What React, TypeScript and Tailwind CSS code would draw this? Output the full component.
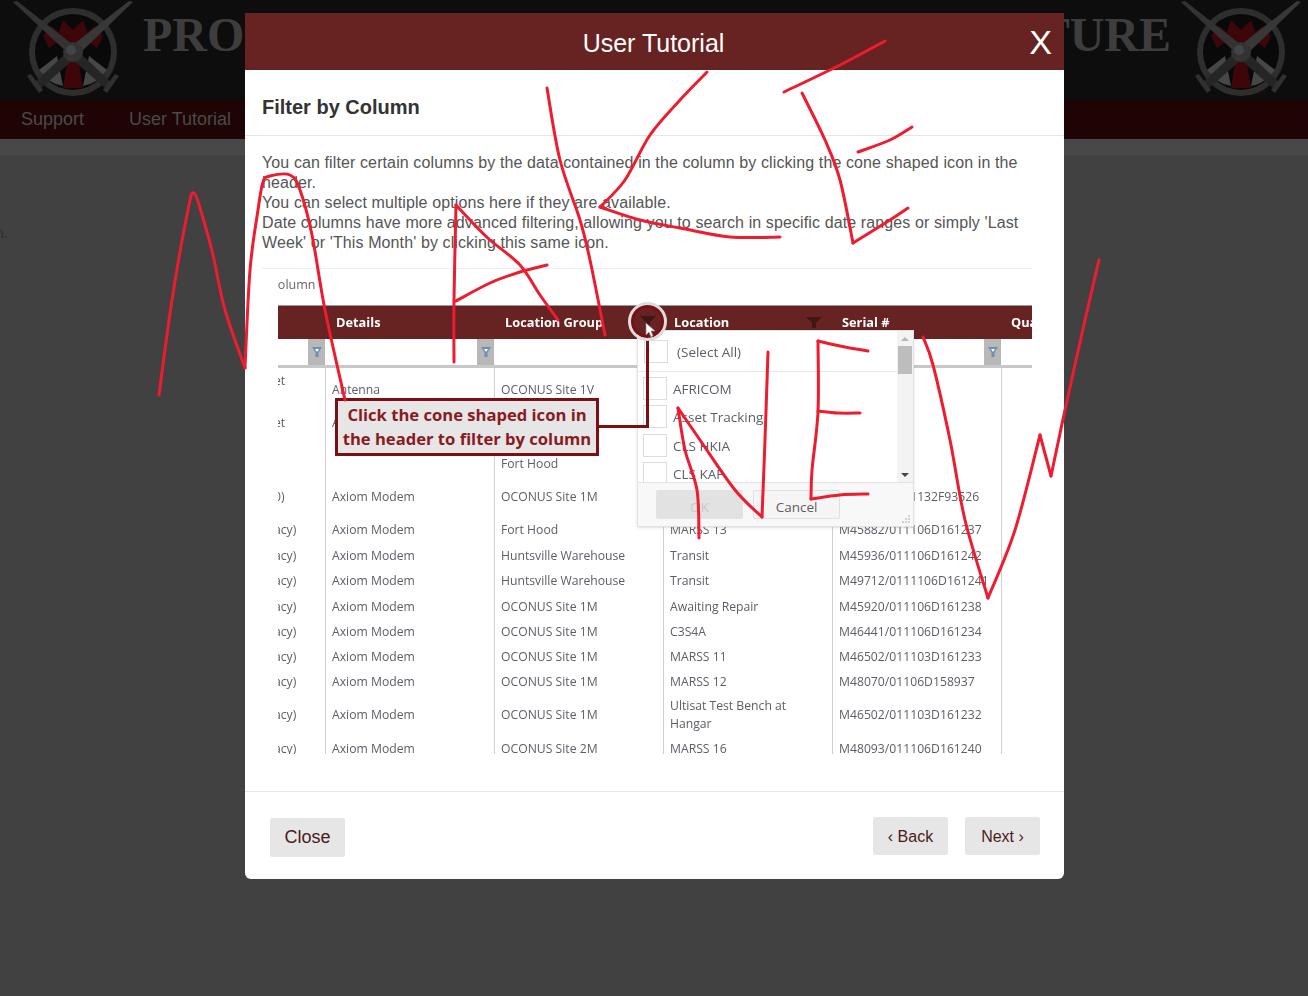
import React from "react";

const Logo = () => (
  <svg width="120" height="100" viewBox="0 0 120 100" className="shrink-0">
    <circle cx="60" cy="52" r="44" fill="#2e2e2e" />
    <circle cx="60" cy="52" r="38" fill="#090909" />
    <path d="M26 70 L44 56 L50 86 Q36 84 26 70Z" fill="#474747" />
    <path d="M94 70 L76 56 L70 86 Q84 84 94 70Z" fill="#474747" />
    <path d="M30 36 L38 26 L46 32 L50 20 L60 30 L70 20 L74 32 L82 26 L90 36 L84 48 L76 42 L68 50 L52 50 L44 42 L36 48Z" fill="#3d0709" />
    <path d="M55 58 L65 58 L70 88 L50 88Z" fill="#3d0709" />
    <path d="M0 2 L4 1 L64 48 L56 54Z" fill="#333" />
    <path d="M116 1 L120 2 L66 54 L56 48Z" fill="#383838" />
    <path d="M52 54 L60 60 L28 88 L22 82Z" fill="#252525" />
    <path d="M68 54 L60 60 L92 88 L98 82Z" fill="#252525" />
    <path d="M14 76 L18 74 L30 90 L26 93Z" fill="#303030" />
    <path d="M106 76 L102 74 L90 90 L94 93Z" fill="#303030" />
    <circle cx="60" cy="52" r="10" fill="#333" />
    <circle cx="58" cy="50" r="5" fill="#444" />
  </svg>
);

const Tri = () => (
  <svg width="16" height="11" viewBox="0 0 16 11"><path d="M0 0H16L10 6V11H6V6Z" fill="#431616" /></svg>
);

const FilterBox = () => (
  <div className="w-[17px] h-[26px] mr-[1px] bg-[#b8b8b8] flex items-center justify-center">
    <svg width="10" height="12" viewBox="0 0 10 12"><path d="M0 1H10L6.5 6.5V11H3.5V6.5Z" fill="#6b8fb5" /><path d="M3 3H7L5.5 5.5H4.5Z" fill="#fff" /></svg>
  </div>
);

type Row = { h: string; a?: string; b?: string; c?: string; d?: string; e?: string; eTop?: boolean; cCls?: string };
const rows: Row[] = [
  { h: "h-[43px]", a: "et", b: "Antenna", c: "OCONUS Site 1V", eTop: true },
  { h: "h-[24px]", a: "et", b: "Axiom Modem" },
  { h: "h-[42px]", c: "Fort Hood", cCls: "pt-[16px]" },
  { h: "h-[40px]", a: "0)", b: "Axiom Modem", c: "OCONUS Site 1M", d: "", e: "M45882/0111132F93526" },
  { h: "h-[26px]", a: "acy)", b: "Axiom Modem", c: "Fort Hood", d: "MARSS 13", e: "M45882/011106D161237" },
  { h: "h-[25px]", a: "acy)", b: "Axiom Modem", c: "Huntsville Warehouse", d: "Transit", e: "M45936/011106D161242" },
  { h: "h-[26px]", a: "acy)", b: "Axiom Modem", c: "Huntsville Warehouse", d: "Transit", e: "M49712/0111106D161241" },
  { h: "h-[25px]", a: "acy)", b: "Axiom Modem", c: "OCONUS Site 1M", d: "Awaiting Repair", e: "M45920/011106D161238" },
  { h: "h-[25px]", a: "acy)", b: "Axiom Modem", c: "OCONUS Site 1M", d: "C3S4A", e: "M46441/011106D161234" },
  { h: "h-[25px]", a: "acy)", b: "Axiom Modem", c: "OCONUS Site 1M", d: "MARSS 11", e: "M46502/011103D161233" },
  { h: "h-[25px]", a: "acy)", b: "Axiom Modem", c: "OCONUS Site 1M", d: "MARSS 12", e: "M48070/01106D158937" },
  { h: "h-[42px]", a: "acy)", b: "Axiom Modem", c: "OCONUS Site 1M", d: "Ultisat Test Bench at Hangar", e: "M46502/011103D161232" },
  { h: "h-[26px]", a: "acy)", b: "Axiom Modem", c: "OCONUS Site 2M", d: "MARSS 16", e: "M48093/011106D161240" },
];

const Cell = ({ children, cls = "" }: { children?: React.ReactNode; cls?: string }) => (
  <div className={`flex items-center pl-[6px] pr-[30px] border-r border-[#cfcfcf] leading-[18px] ${cls}`}>{children}</div>
);

const Check = ({ cls = "" }: { cls?: string }) => (
  <div className={`w-[24px] h-[23px] border border-[#dcdcdc] bg-white shrink-0 ${cls}`} />
);

const Shot = () => (
  <div className="relative w-[754px] h-[485px] overflow-hidden ml-[16px] font-['Open_Sans',sans-serif] text-[12.2px] text-[#5d5d66] blur-[0.35px]">
    <div className="h-[36px] flex items-center text-[12.5px] text-[#666]"><span className="-ml-[8px] -mt-[3px]">Column</span></div>
    <div className="h-[34px] bg-[#672222] grid grid-cols-[48px_169px_169px_169px_169px_1fr] items-center text-white font-bold text-[12.8px] border-t border-[#999]">
      <div />
      <div className="pl-[10px]">Details</div>
      <div className="pl-[10px]">Location Group</div>
      <div className="pl-[10px] flex items-center justify-between pr-[11px]"><span>Location</span><Tri /></div>
      <div className="pl-[9px]">Serial #</div>
      <div className="pl-[9px]">Quantity</div>
    </div>
    <div className="h-[29px] grid grid-cols-[48px_169px_169px_169px_169px_1fr] border-b-[3px] border-[#c8c8c8]">
      <div className="flex justify-end"><FilterBox /></div>
      <div className="flex justify-end"><FilterBox /></div>
      <div />
      <div />
      <div className="flex justify-end"><FilterBox /></div>
      <div />
    </div>
    {rows.map((r, i) => (
      <div key={i} className={`${r.h} grid grid-cols-[48px_169px_169px_169px_169px_1fr]`}>
        <Cell cls={`!pl-0 !pr-0 ${r.eTop ? "items-start pt-[4px]" : ""}`}><span className="-ml-[4px]">{r.a}</span></Cell>
        <Cell>{r.b}</Cell>
        <Cell cls={r.cCls ?? ""}>{r.c}</Cell>
        <Cell>{r.d}</Cell>
        <Cell cls="!pr-0">{r.e}</Cell>
        <div />
      </div>
    ))}

    {/* filter dropdown */}
    <div className="absolute left-[359px] top-[61px] w-[277px] h-[197px] bg-white border border-[#e2e2e2] shadow-sm flex flex-col text-[13.5px]">
      <div className="flex flex-1 min-h-0">
        <div className="flex-1 min-w-0">
          <div className="h-[41px] flex items-center pl-[6px] gap-[9px] border-b border-[#e8e8e8]"><Check /><span className="pt-[3px]">(Select All)</span></div>
          <div className="h-[28px] mt-[2px] flex items-center pl-[5px] gap-[6px]"><Check /><span className="pt-[2px]">AFRICOM</span></div>
          <div className="h-[29px] flex items-center pl-[5px] gap-[6px]"><Check /><span className="pt-[2px]">Asset Tracking</span></div>
          <div className="h-[28px] flex items-center pl-[5px] gap-[6px]"><Check /><span className="pt-[2px]">CLS HKIA</span></div>
          <div className="h-[24px] flex items-start pl-[5px] gap-[6px] pt-[3px]"><Check /><span className="pt-[2px]">CLS KAF</span></div>
        </div>
        <div className="w-[16px] bg-[#f3f3f3] flex flex-col items-center justify-between pt-[6px] pb-[5px]">
          <div className="w-[14px] flex flex-col items-center gap-[5px]">
            <div className="w-0 h-0 border-x-[4px] border-x-transparent border-b-[4px] border-b-[#b5b5b5]" />
            <div className="w-[14px] h-[28px] bg-[#bdbdbd]" />
          </div>
          <div className="w-0 h-0 border-x-[4px] border-x-transparent border-t-[4px] border-t-[#444]" />
        </div>
      </div>
      <div className="relative h-[44px] bg-[#f8f8f8] border-t border-[#e2e2e2] flex gap-[10px] pl-[18px] pt-[7px]">
        <div className="w-[87px] h-[29px] pt-[5px] rounded-[2px] bg-[#e2e2e2] flex items-center justify-center text-[#c8c8c8]">OK</div>
        <div className="w-[87px] h-[29px] pt-[5px] rounded-[2px] bg-[#f5f5f5] border border-[#e0e0e0] flex items-center justify-center">Cancel</div>
        <svg className="absolute right-[2px] bottom-[2px]" width="10" height="10" viewBox="0 0 10 10" fill="#d0d0d0">
          <rect x="7" y="1" width="2" height="2" /><rect x="4" y="4" width="2" height="2" /><rect x="7" y="4" width="2" height="2" /><rect x="1" y="7" width="2" height="2" /><rect x="4" y="7" width="2" height="2" /><rect x="7" y="7" width="2" height="2" />
        </svg>
      </div>
    </div>

    {/* callout connector */}
    <div className="absolute left-[368px] top-[69px] w-[3px] h-[90px] bg-[#7a1014]" />
    <div className="absolute left-[320px] top-[156px] w-[51px] h-[3px] bg-[#7a1014]" />
    <div className="absolute left-[353px] top-[36px] w-[33px] h-[33px] rounded-full border-[3px] border-[#7a1014] outline-[3px] outline-[#dcdcdc] bg-[#672222] flex items-center justify-center">
      <Tri />
    </div>
    <svg className="absolute left-[367px] top-[53px]" width="12" height="16" viewBox="0 0 12 16">
      <path d="M1 1V13L4 10L6 15L8 14L6 9H10Z" fill="#fff" stroke="#888" strokeWidth="0.7" />
    </svg>
    <div className="absolute left-[57px] top-[129px] w-[264px] h-[58px] bg-[#e6e6e6] border-[3px] border-[#7a1014] flex items-center justify-center text-center font-bold text-[16.6px] leading-[24px] whitespace-nowrap text-[#8a1a1e]">
      <span>Click the cone shaped icon in<br />the header to filter by column</span>
    </div>
  </div>
);

const strokes: number[][][] = [
  [[159,395],[172,300],[187,215],[194,193],[205,225],[213,255],[225,310],[245,368]],
  [[245,368],[250,270],[258,210],[263,182],[270,176],[290,175],[300,190],[312,235],[325,310],[345,400]],
  [[454,362],[454,300],[456,205]],
  [[456,205],[470,220],[490,240],[520,265],[540,295],[558,320]],
  [[456,301],[490,283],[520,272],[547,265]],
  [[547,88],[560,160],[580,220],[590,260],[605,335]],
  [[707,72],[680,100],[650,135],[625,180],[600,207]],
  [[600,207],[640,220],[680,228],[730,237],[780,237]],
  [[885,41],[840,65],[784,92]],
  [[802,93],[825,140],[840,180],[853,243]],
  [[853,243],[890,220],[908,208]],
  [[858,152],[890,140],[912,127]],
  [[699,538],[697,490],[685,450],[678,408]],
  [[678,408],[700,440],[735,490],[762,517]],
  [[762,517],[765,440],[768,352]],
  [[868,351],[845,347],[818,341]],
  [[818,341],[818,412],[812,470],[811,499]],
  [[811,499],[840,495],[868,494]],
  [[818,411],[838,413],[860,413]],
  [[923,337],[933,365],[950,440],[965,520],[988,598]],
  [[988,598],[1015,530],[1040,435]],
  [[1040,435],[1051,476]],
  [[1051,476],[1065,410],[1085,320],[1099,260]],
];

const smooth = (p: number[][]) => {
  let d = `M${p[0][0]} ${p[0][1]}`;
  for (let i = 0; i < p.length - 1; i++) {
    const a = p[Math.max(0, i - 1)], b = p[i], c = p[i + 1], e = p[Math.min(p.length - 1, i + 2)];
    d += ` C${b[0] + (c[0] - a[0]) / 6} ${b[1] + (c[1] - a[1]) / 6} ${c[0] - (e[0] - b[0]) / 6} ${c[1] - (e[1] - b[1]) / 6} ${c[0]} ${c[1]}`;
  }
  return d;
};

export default function App() {
  return (
    <div className="relative w-[1308px] h-[996px] overflow-hidden bg-[#414141] font-['Liberation_Sans',Arial,sans-serif]">
      <header className="h-[100px] bg-[#0d0d0d] flex items-start justify-between">
        <div className="flex">
          <div className="ml-[13px]"><Logo /></div>
          <span className="ml-[10px] font-['Liberation_Serif',serif] font-bold text-[48px] leading-[69px] text-[#3d3d3d]">PRO</span>
        </div>
        <div className="flex">
          <span className="mr-[10px] font-['Liberation_Serif',serif] font-bold text-[48px] leading-[69px] text-[#3d3d3d]">TURE</span>
          <div className="mr-[7px]"><Logo /></div>
        </div>
      </header>
      <nav className="h-[39px] bg-[#1f0405] flex items-center pl-[21px] gap-[45px] text-[18px] text-[#4a4a4a]">
        <span>Support</span>
        <span>User Tutorial</span>
      </nav>
      <div className="h-[16px] bg-[#484848] border-b border-[#4c4c4c]" />
      <p className="mt-[68px] -ml-[4px] text-[14px] text-[#2a2a2a]">n.</p>

      <div className="absolute left-[245px] top-[13px] w-[819px] h-[866px] bg-white rounded-b-[6px] flex flex-col">
        <div className="relative h-[57px] shrink-0 bg-[#672222] flex items-center justify-center pt-[4px] pr-[2px] text-white text-[25px]">
          User Tutorial
          <span className="absolute right-[12px] top-[7px] text-[34px] leading-[44px]">X</span>
        </div>
        <div className="h-[66px] shrink-0 border-b border-[#e5e5e5] flex items-center pl-[17px] pt-[8px] text-[20px] font-bold text-[#333]">
          Filter by Column
        </div>
        <div className="flex-1 min-h-0 px-[17px] pt-[17px]">
          <div className="w-[770px] text-[16px] leading-[20px] tracking-[0.11px] text-[#555]">
            You can filter certain columns by the data contained in the column by clicking the cone shaped icon in the header.<br />
            You can select multiple options here if they are available.<br />
            Date columns have more advanced filtering, allowing you to search in specific date ranges or simply 'Last Week' or 'This Month' by clicking this same icon.
          </div>
          <div className="w-[770px] mt-[15px] border-t border-[#eee]">
            <Shot />
          </div>
        </div>
        <div className="h-[88px] shrink-0 border-t border-[#e5e5e5] flex justify-between items-start pl-[25px] pr-[24px] pt-[25px] text-[#4d1a1a]">
          <button className="w-[75px] h-[39px] mt-[1px] bg-[#e6e6e6] rounded-[2px] text-[18px]">Close</button>
          <div className="flex gap-[17px]">
            <button className="w-[75px] h-[38px] pt-[1px] bg-[#e6e6e6] rounded-[2px] text-[16px]">‹ Back</button>
            <button className="w-[75px] h-[38px] pt-[1px] bg-[#e6e6e6] rounded-[2px] text-[16px]">Next ›</button>
          </div>
        </div>
      </div>

      <svg className="absolute left-0 top-0 pointer-events-none" width="1308" height="996" viewBox="0 0 1308 996" fill="none" stroke="#ed1c2e" strokeWidth="3" strokeLinejoin="round" strokeLinecap="round">
        {strokes.map((p, i) => <path key={i} d={smooth(p)} />)}
      </svg>
    </div>
  );
}
